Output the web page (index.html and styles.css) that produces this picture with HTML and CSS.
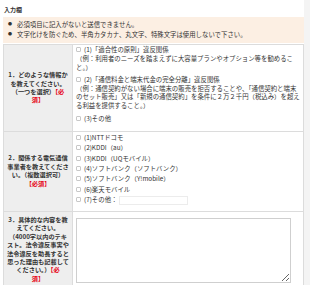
FILE: index.html
```html
<!DOCTYPE html>
<html lang="ja">
<head>
    <meta charset="UTF-8">
    <meta name="viewport" content="width=device-width, initial-scale=1.0">
    <title>入力欄</title>
    <link rel="stylesheet" href="styles.css">
</head>
<body>
    <div class="page">
        <h2 class="form-title">入力欄</h2>

        <!-- 注意事項 -->
        <div class="notice">
            <ul>
                <li>必須項目に記入がないと送信できません。</li>
                <li>文字化けを防ぐため、半角カタカナ、丸文字、特殊文字は使用しないで下さい。</li>
            </ul>
        </div>

        <table class="form-table">
            <tr>
                <th>1．どのような情報か<br>を教えてください。<br>（一つを選択）<span class="req">【必<br>須】</span></th>
                <td class="options">
                    <label class="opt"><input type="checkbox" name="info">(1)「適合性の原則」違反関係<br>（例：利用者のニーズを踏まえずに大容量プランやオプション等を勧めること。）</label>
                    <label class="opt"><input type="checkbox" name="info">(2)「通信料金と端末代金の完全分離」違反関係<br>（例：通信契約がない場合に端末の販売を拒否することや、「通信契約と端末のセット販売」又は「新規の通信契約」を条件に２万２千円（税込み）を超える利益を提供すること。）</label>
                    <label class="opt"><input type="checkbox" name="info">(3)その他</label>
                </td>
            </tr>
            <tr>
                <th>2．関係する電気通信<br>事業者を教えてくださ<br>い。（複数選択可）<br><span class="req">【必須】</span></th>
                <td class="options carriers">
                    <label class="opt"><input type="checkbox" name="carrier">(1)NTTドコモ</label>
                    <label class="opt"><input type="checkbox" name="carrier">(2)KDDI（au）</label>
                    <label class="opt"><input type="checkbox" name="carrier">(3)KDDI（UQモバイル）</label>
                    <label class="opt"><input type="checkbox" name="carrier">(4)ソフトバンク（ソフトバンク）</label>
                    <label class="opt"><input type="checkbox" name="carrier">(5)ソフトバンク（Y!mobile）</label>
                    <label class="opt"><input type="checkbox" name="carrier">(6)楽天モバイル</label>
                    <label class="opt"><input type="checkbox" name="carrier">(7)その他：<input type="text" class="other-input"></label>
                </td>
            </tr>
            <tr>
                <th>3．具体的な内容を教<br>えてください。<br>（4000字以内のテキ<br>スト。法令違反事実や<br>法令違反を助長すると<br>思った理由も記載して<br>ください。）<span class="req">【必<br>須】</span></th>
                <td class="detail">
                    <textarea class="detail-text"></textarea>
                </td>
            </tr>
        </table>
    </div>
</body>
</html>
```

FILE: styles.css
```css
* {
    margin: 0;
    padding: 0;
    box-sizing: border-box;
}

html {
    background: #f4f4f4;
}

body {
    font-family: "Noto Sans CJK JP", "Noto Sans", sans-serif;
    color: #333;
}

.page {
    width: 304px;
    min-height: 285px;
    background: #fff;
    padding: 6px 0 0 3px;
}

.form-title {
    font-size: 6px;
    font-weight: bold;
    line-height: 8px;
    margin: 0 0 3px 1px;
}

/* Notice */
.notice {
    background: #fcefe3;
    padding: 3px 5px 4px;
    font-size: 6.4px;
    line-height: 9.5px;
}

.notice ul {
    list-style: none;
}

.notice li::before {
    content: "●";
    display: inline-block;
    width: 9px;
    font-size: 4px;
    vertical-align: top;
}

/* Form table */
.form-table {
    width: 301px;
    border-collapse: collapse;
    border: 1px solid #dcdcdc;
    margin-top: 1px;
}

.form-table th {
    width: 69px;
    background: #eeeeee;
    border: 1px solid #dcdcdc;
    padding: 0 2px;
    font-size: 6.2px;
    line-height: 8.4px;
    text-align: center;
    vertical-align: middle;
}

.form-table td {
    border: 1px solid #dcdcdc;
    vertical-align: top;
}

.req {
    color: #e60012;
}

.options {
    padding: 1px 2px 4px 3px;
    font-size: 6.4px;
    line-height: 8.8px;
}

.carriers {
    padding-top: 2px;
}

.opt {
    display: block;
    margin-bottom: 3.5px;
}

.carriers .opt {
    margin-bottom: 1.6px;
}

.opt input[type="checkbox"] {
    appearance: none;
    width: 5px;
    height: 5px;
    border: 1px solid #c8c8c8;
    border-radius: 1px;
    background: #fff;
    margin: 1px 3px 0 0;
    vertical-align: top;
}

.other-input {
    width: 69px;
    height: 8.5px;
    border: 1px solid #ececec;
    vertical-align: top;
    margin-left: 2px;
    font-size: 6px;
}

.detail {
    padding: 6px 3px 5px;
}

.detail-text {
    display: block;
    width: 215px;
    height: 65px;
    border: 1px solid #cfcfcf;
    font-size: 6.5px;
    font-family: inherit;
}
```
